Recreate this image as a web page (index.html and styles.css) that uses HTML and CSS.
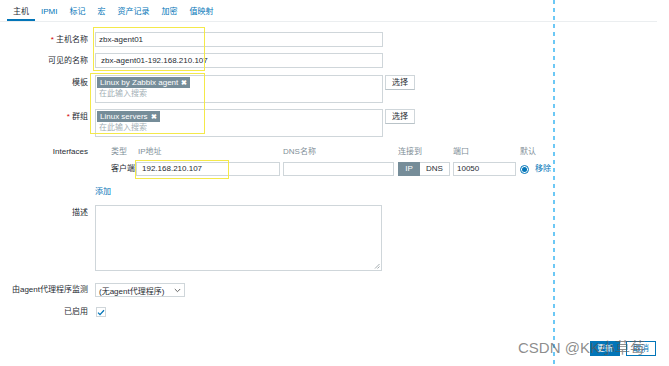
FILE: index.html
```html
<!DOCTYPE html>
<html lang="zh">
<head>
<meta charset="utf-8">
<title>主机</title>
<link rel="stylesheet" href="styles.css">
</head>
<body>
<div class="page">
  <nav class="tabs">
    <span class="tab active">主机</span>
    <span class="tab">IPMI</span>
    <span class="tab">标记</span>
    <span class="tab">宏</span>
    <span class="tab">资产记录</span>
    <span class="tab">加密</span>
    <span class="tab">值映射</span>
  </nav>

  <div class="form">
    <div class="row r-name">
      <div class="lbl"><span class="req">*</span> 主机名称</div>
      <div class="txt w288">zbx-agent01</div>
    </div>
    <div class="row r-visible">
      <div class="lbl">可见的名称</div>
      <div class="txt w288 pad5">zbx-agent01-192.168.210.107</div>
    </div>
    <div class="row r-tpl">
      <div class="lbl">模板</div>
      <div class="ms">
        <span class="tag">Linux by Zabbix agent <b class="x">✖</b></span>
        <div class="ph">在此输入搜索</div>
      </div>
      <div class="btn-sel">选择</div>
    </div>
    <div class="row r-grp">
      <div class="lbl"><span class="req">*</span> 群组</div>
      <div class="ms">
        <span class="tag">Linux servers <b class="x">✖</b></span>
        <div class="ph">在此输入搜索</div>
      </div>
      <div class="btn-sel">选择</div>
    </div>

    <div class="row r-if">
      <div class="lbl lbl-if">Interfaces</div>
      <div class="iface">
        <span></span>
        <span class="th">类型</span>
        <span class="th th-ip">IP地址</span>
        <span class="th">DNS名称</span>
        <span class="th">连接到</span>
        <span class="th">端口</span>
        <span class="th">默认</span>
        <span></span>

        <span></span>
        <span class="td">客户端</span>
        <span><span class="txt ip">192.168.210.107</span></span>
        <span><span class="txt dns"></span></span>
        <span class="toggle"><span class="seg on">IP</span><span class="seg">DNS</span></span>
        <span><span class="txt port">10050</span></span>
        <span class="radio"><span class="dot"></span></span>
        <span class="link">移除</span>
      </div>
    </div>

    <div class="row r-add">
      <div class="lbl"></div>
      <span class="link add">添加</span>
    </div>

    <div class="row r-desc">
      <div class="lbl">描述</div>
      <div class="area">
        <svg class="grip" width="6" height="6" viewBox="0 0 6 6"><path d="M5.5 1 L1 5.5 M5.5 3.5 L3.5 5.5" stroke="#8a9499" stroke-width="0.8"/></svg>
      </div>
    </div>

    <div class="row r-proxy">
      <div class="lbl lbl-sm">由agent代理程序监测</div>
      <div class="select">
        <span>(无agent代理程序)</span>
        <svg width="7" height="5" viewBox="0 0 7 5"><path d="M0.8 1 L3.5 3.7 L6.2 1" fill="none" stroke="#555" stroke-width="0.9"/></svg>
      </div>
    </div>

    <div class="row r-en">
      <div class="lbl lbl-sm">已启用</div>
      <div class="check">
        <svg width="8" height="7" viewBox="0 0 8 7"><path d="M1 3.6 L3 5.6 L7 1.2" fill="none" stroke="#0275b8" stroke-width="1.3"/></svg>
      </div>
    </div>

    <div class="actions">
      <span class="btn primary">更新</span>
      <span class="btn outline">取消</span>
    </div>
  </div>

  <div class="hl hl1"></div>
  <div class="hl hl2"></div>
  <div class="hl hl3"></div>
  <div class="guide"></div>
  <div class="watermark">CSDN @KK小草莓</div>
</div>
</body>
</html>
```

FILE: styles.css
```css
* { box-sizing: border-box; }

body {
  margin: 0;
  background: #fff;
  font-family: "Liberation Sans", "Noto Sans CJK SC", sans-serif;
  font-size: 8px;
  color: #1f2c33;
}

.page {
  position: relative;
  width: 669px;
  height: 366px;
  overflow: hidden;
}

/* tabs */
.tabs {
  display: flex;
  width: 657px;
  height: 22px;
  padding-left: 7px;
  border-bottom: 1px solid #ebeef0;
}
.tab {
  height: 21px;
  padding: 5px 6px 0;
  line-height: 14px;
  color: #0275b8;
  border-bottom: 2px solid transparent;
}
.tab.active {
  color: #1f2c33;
  border-bottom-color: #0275b8;
}

/* form */
.form {
  display: flex;
  flex-direction: column;
  width: 657px;
  padding-top: 10px;
}
.row {
  display: flex;
  align-items: flex-start;
  gap: 7px;
}
.lbl {
  width: 88px;
  flex: none;
  text-align: right;
  line-height: 15px;
  white-space: nowrap;
}
.lbl-sm { line-height: 14px; }
.lbl-if { line-height: 11px; }
.req { color: #d40000; }

.r-visible { margin-top: 6px; }
.r-tpl { margin-top: 7px; }
.r-grp { margin-top: 6px; }
.r-if { margin-top: 9px; }
.r-add { margin-top: 8px; }
.r-desc { margin-top: 6px; }
.r-proxy { margin-top: 12px; }
.r-en { margin-top: 8px; }

.txt {
  display: block;
  height: 15px;
  border: 1px solid #cfd6da;
  background: #fff;
  padding: 0 3px;
  line-height: 13px;
  white-space: nowrap;
  overflow: hidden;
}
.w288 { width: 288px; }
.pad5 { padding-left: 5px; }

/* multiselect */
.ms {
  width: 288px;
  height: 28px;
  border: 1px solid #cfd6da;
  padding: 1px;
}
.tag {
  display: inline-flex;
  align-items: center;
  gap: 3px;
  height: 11px;
  padding: 0 3px;
  background: #768d99;
  color: #fff;
  line-height: 11px;
  white-space: nowrap;
}
.tag .x {
  font-size: 7px;
  font-weight: bold;
}
.ph {
  padding-left: 2px;
  line-height: 12px;
  color: #a3afb5;
}
.btn-sel {
  margin-left: -5px;
  width: 30px;
  height: 15px;
  border: 1px solid #cfd6da;
  border-bottom-color: #b9c3c8;
  background: #fff;
  text-align: center;
  line-height: 13px;
}

/* interfaces */
.iface {
  display: grid;
  grid-template-columns: 16px 25px 147px 115px 55px 67px 15px auto;
  row-gap: 5px;
  align-items: center;
}
.iface > span { white-space: nowrap; }
.th {
  line-height: 11px;
  color: #7f8f98;
}
.th-ip { padding-left: 2px; }
.td { line-height: 14px; }
.iface .txt {
  height: 14px;
  line-height: 12px;
}
.ip { width: 144px; padding-left: 5px; }
.dns { width: 111px; }
.port { width: 63px; }
.toggle {
  display: flex;
  height: 14px;
}
.seg {
  height: 14px;
  width: 30px;
  border: 1px solid #cfd6da;
  border-left: none;
  text-align: center;
  line-height: 12px;
}
.seg.on {
  width: 22px;
  background: #768d99;
  border: 1px solid #768d99;
  color: #fff;
}
.radio {
  width: 9px;
  height: 9px;
  border: 1px solid #0275b8;
  border-radius: 50%;
  display: flex;
  align-items: center;
  justify-content: center;
}
.dot {
  width: 5px;
  height: 5px;
  border-radius: 50%;
  background: #0275b8;
}
.link {
  color: #0275b8;
  line-height: 14px;
}
.add { line-height: 15px; }

/* textarea */
.area {
  position: relative;
  width: 287px;
  height: 66px;
  border: 1px solid #cfd6da;
  background: #fff;
}
.grip {
  position: absolute;
  right: 1px;
  bottom: 1px;
}

/* select */
.select {
  display: flex;
  align-items: center;
  justify-content: space-between;
  width: 90px;
  height: 14px;
  padding: 0 3px;
  border: 1px solid #cfd6da;
  white-space: nowrap;
}

/* checkbox */
.check {
  margin-top: 2px;
  margin-left: 1px;
  width: 10px;
  height: 10px;
  border: 1px solid #cfd6da;
  display: flex;
  align-items: center;
  justify-content: center;
}

/* actions */
.actions {
  display: flex;
  justify-content: flex-end;
  gap: 6px;
  margin-top: 22px;
  padding-right: 1px;
}
.btn {
  width: 30px;
  height: 15px;
  text-align: center;
  line-height: 13px;
  border: 1px solid #0275b8;
}
.btn.primary {
  background: #0275b8;
  color: #fff;
}
.btn.outline {
  background: #fff;
  color: #0275b8;
}

/* annotation overlays */
.hl {
  position: absolute;
  border: 1px solid #f4e94a;
}
.hl1 { left: 93px; top: 27px; width: 112px; height: 44px; }
.hl2 { left: 90px; top: 73px; width: 115px; height: 61px; }
.hl3 { left: 135px; top: 160px; width: 94px; height: 19px; }

.guide {
  position: absolute;
  left: 553px;
  top: 0;
  width: 2px;
  height: 366px;
  background: repeating-linear-gradient(to bottom, #6cc8f5 0 4px, transparent 4px 8px);
}

.watermark {
  position: absolute;
  left: 518px;
  top: 339px;
  font-size: 15px;
  line-height: 18px;
  color: rgba(90, 90, 90, 0.7);
  white-space: nowrap;
}
```
